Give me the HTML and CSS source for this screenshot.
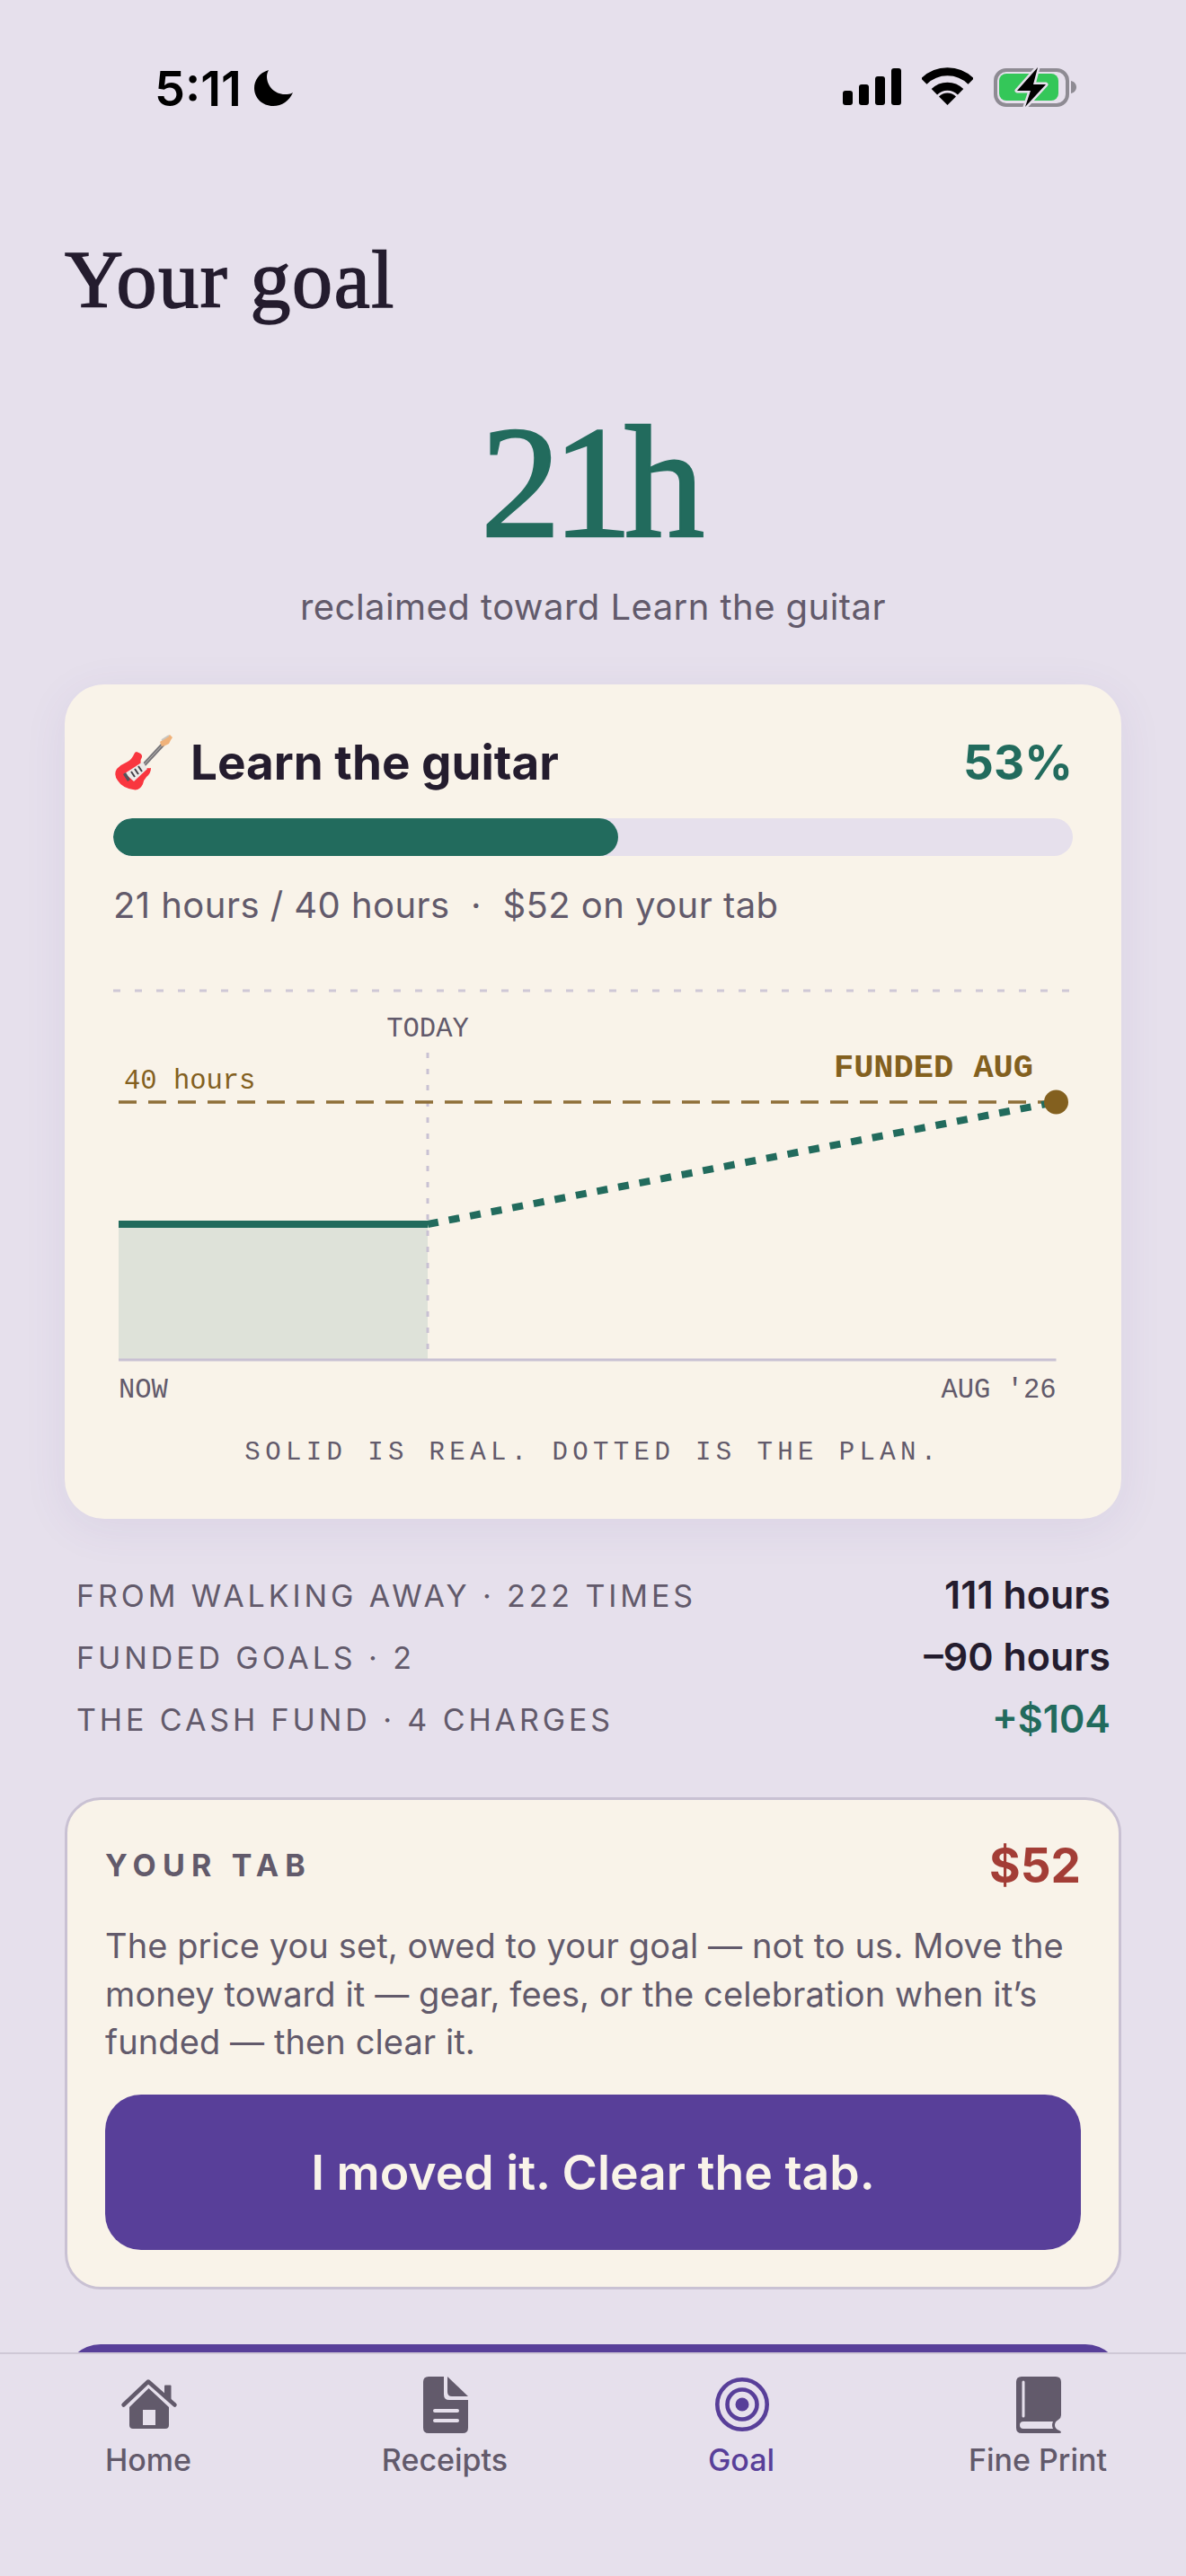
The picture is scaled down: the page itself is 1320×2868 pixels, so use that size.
FILE: index.html
```html
<!DOCTYPE html>
<html lang="en">

<head>
    <meta charset="UTF-8">
    <meta name="viewport" content="width=device-width, initial-scale=1.0">
    <title>Your goal</title>
    <link rel="stylesheet" href="styles.css">
</head>

<body>
    <div class="app">
        <div class="status-bar">
            <div class="clock">
                <span class="time">5:11</span>
                <svg class="moon" width="43" height="41" viewBox="0 0 43 41">
                    <path d="M16 1C5 4 0 13 0 21C0 32 9 41 21 41C31 41 39 35 43 26C40 28 37 28 34 28C23 28 14 19 14 8C14 5 15 3 16 1Z" fill="#000" />
                </svg>
            </div>
            <div class="status-icons">
                <svg width="65" height="43" viewBox="0 0 65 43">
                    <rect x="0" y="26" width="11" height="16" rx="3" />
                    <rect x="18" y="19" width="11" height="23" rx="3" />
                    <rect x="36" y="10" width="11" height="32" rx="3" />
                    <rect x="54" y="1" width="11" height="41" rx="3" />
                </svg>
                <svg width="57" height="43" viewBox="0 0 57 43">
                    <path d="M2.3 15.6A37 37 0 0 1 54.7 15.6" fill="none" stroke="#000" stroke-width="9" />
                    <path d="M13.9 27.2A20.7 20.7 0 0 1 43.1 27.2" fill="none" stroke="#000" stroke-width="9" />
                    <path d="M28.5 42L19 32.5A13.4 13.4 0 0 1 38 32.5Z" />
                </svg>
                <svg width="92" height="44" viewBox="0 0 92 44">
                    <rect x="2" y="3" width="80" height="39" rx="12" fill="none" stroke="#8e8b93" stroke-width="4" />
                    <path d="M86 15C90 16 92 19 92 22C92 25 90 28 86 29Z" fill="#8e8b93" />
                    <rect x="6" y="7" width="66" height="30" rx="8" fill="#34c759" />
                    <path d="M49 0L26 26H41L35 44L58 19L44 19Z" stroke="#e6e0ec" stroke-width="5" paint-order="stroke" stroke-linejoin="round" />
                </svg>
            </div>
        </div>

        <main class="content">
            <h1>Your goal</h1>
            <div class="hero-number">21h</div>
            <div class="hero-sub">reclaimed toward Learn the guitar</div>

            <section class="goal-card">
                <div class="goal-head">
                    <div class="goal-name">
                        <svg class="guitar" width="68" height="68" viewBox="0 0 68 68">
                            <path d="M31 40L57 12" stroke="#77757a" stroke-width="4.5" />
                            <path d="M31 40L57 12" stroke="#b9b6b2" stroke-width="1" />
                            <path d="M52 11L63 3L66 6L64 9L62 13L58 15L54 16Z" fill="#f0b27a" />
                            <path d="M54 9L62 4" stroke="#c9c5c0" stroke-width="2" />
                            <path d="M26 22Q33 24 32 28Q29 33 32 38Q36 41 42 40Q42 46 37 50Q34 53 33 58Q29 66 22 64Q10 62 5 54Q0 47 4 41Q9 36 16 33Q21 30 23 25Q24 22 26 22Z" fill="#f9363f" />
                            <path d="M13 46L33 33L38 41L23 55Z" fill="#eceae8" />
                            <path d="M11 47L16 55L19 53L14 45Z" fill="#55525a" />
                            <path d="M20 44L24 50M24 41L28 47M28 38L32 44" stroke="#45424a" stroke-width="2" />
                        </svg>
                        <h2>Learn the guitar</h2>
                    </div>
                    <div class="goal-pct">53%</div>
                </div>
                <div class="progress">
                    <div class="progress-fill" style="width: 52.6%"></div>
                </div>
                <p class="goal-stats">21 hours / 40 hours &nbsp;·&nbsp; $52 on your tab</p>

                <svg class="chart" width="1068" height="470" viewBox="0 0 1068 470">
                    <line x1="0" y1="3" x2="1068" y2="3" stroke="#cfc8d6" stroke-width="3" stroke-dasharray="8 16" />
                    <rect x="6" y="263" width="344" height="151" fill="#dee2d9" />
                    <line x1="350" y1="72" x2="350" y2="414" stroke="#c9c1d3" stroke-width="3" stroke-dasharray="6 12" />
                    <line x1="6" y1="127" x2="1049" y2="127" stroke="#8e6f38" stroke-width="3.5" stroke-dasharray="20 13" />
                    <line x1="6" y1="414" x2="1049.5" y2="414" stroke="#c9c1d3" stroke-width="3" />
                    <line x1="6" y1="263" x2="350" y2="263" stroke="#226b5d" stroke-width="8" />
                    <line x1="350" y1="263" x2="1049" y2="127" stroke="#226b5d" stroke-width="8" stroke-dasharray="12 12" />
                    <circle cx="1049.5" cy="127" r="13.5" fill="#83601f" />
                    <text class="chart-label" x="350" y="54" text-anchor="middle">TODAY</text>
                    <text class="chart-label gold" x="12" y="112">40 hours</text>
                    <text class="chart-funded" x="1024" y="99" text-anchor="end">FUNDED AUG</text>
                    <text class="chart-label" x="6" y="456">NOW</text>
                    <text class="chart-label" x="1049.5" y="456" text-anchor="end">AUG '26</text>
                </svg>
                <p class="chart-caption">SOLID IS REAL. DOTTED IS THE PLAN.</p>
            </section>

            <div class="ledger">
                <div class="ledger-row">
                    <span class="ledger-label">FROM WALKING AWAY · 222 TIMES</span>
                    <span class="ledger-value">111 hours</span>
                </div>
                <div class="ledger-row">
                    <span class="ledger-label">FUNDED GOALS · 2</span>
                    <span class="ledger-value">–90 hours</span>
                </div>
                <div class="ledger-row">
                    <span class="ledger-label">THE CASH FUND · 4 CHARGES</span>
                    <span class="ledger-value green">+$104</span>
                </div>
            </div>

            <section class="tab-card">
                <div class="tab-head">
                    <span class="tab-title">YOUR TAB</span>
                    <span class="tab-amount">$52</span>
                </div>
                <p class="tab-text">The price you set, owed to your goal — not to us. Move the money toward it — gear, fees, or the celebration when it’s funded — then clear it.</p>
                <button class="primary-btn">I moved it. Clear the tab.</button>
            </section>

            <button class="primary-btn next-btn"></button>
        </main>

        <nav class="tabbar">
            <div class="tab-item">
                <svg width="72" height="72" viewBox="0 0 72 72">
                    <path d="M54 14.5a1 1 0 0 1 1-1h5.5a1 1 0 0 1 1 1V31L54 24Z" fill="#625a6b" />
                    <path d="M8.5 35.5L36 9.5L65.5 35.5" fill="none" stroke="#625a6b" stroke-width="4.5" stroke-linecap="round" stroke-linejoin="round" />
                    <path fill-rule="evenodd" fill="#625a6b" d="M36.5 17L59 38V58Q59 62 55 62H19Q15 62 15 58V38ZM30 41V58H44V41Z" />
                </svg>
                <span>Home</span>
            </div>
            <div class="tab-item">
                <svg width="72" height="72" viewBox="0 0 72 72">
                    <path fill="#625a6b" d="M18 4H35V24Q35 30 41 30H62V61Q62 67 56 67H18Q12 67 12 61V10Q12 4 18 4Z" />
                    <path fill="#625a6b" d="M39 4L62 26H44Q39 26 39 21Z" />
                    <path d="M25 42H50M25 53H50" stroke="#e6e0ec" stroke-width="4" stroke-linecap="round" />
                </svg>
                <span>Receipts</span>
            </div>
            <div class="tab-item active">
                <svg width="72" height="72" viewBox="0 0 72 72">
                    <circle cx="37" cy="35" r="27.7" fill="none" stroke="#583f99" stroke-width="4.6" />
                    <circle cx="37" cy="35" r="16.5" fill="none" stroke="#583f99" stroke-width="4.6" />
                    <circle cx="37" cy="35" r="7.5" fill="#583f99" />
                </svg>
                <span>Goal</span>
            </div>
            <div class="tab-item">
                <svg width="72" height="72" viewBox="0 0 72 72">
                    <path fill="#625a6b" fill-rule="evenodd" d="M18 4H56Q62 4 62 10V47Q62 50 59 52Q55 54 55 58Q55 62 60 64Q62 65 62 66Q62 67 60 67H18Q12 67 12 61V10Q12 4 18 4ZM20 54Q16 54 16 58Q16 62 20 62H53Q51 58 53 54Z" />
                    <path d="M20 10V48" stroke="#e6e0ec" stroke-width="3" stroke-linecap="round" />
                </svg>
                <span>Fine Print</span>
            </div>
        </nav>
    </div>
</body>

</html>
```

FILE: styles.css
```css
* {
    box-sizing: border-box;
}

body {
    margin: 0;
    background-color: #e6e0ec;
    font-family: Inter, "Noto Sans", sans-serif;
    color: #241c2e;
}

.app {
    width: 1320px;
    height: 2868px;
    display: flex;
    flex-direction: column;
    overflow: hidden;
}

/* status bar */
.status-bar {
    height: 150px;
    flex-shrink: 0;
    display: flex;
    justify-content: space-between;
    align-items: flex-start;
    padding: 69px 122px 0 172px;
}

.clock {
    display: flex;
    gap: 14px;
}

.time {
    font-size: 54px;
    line-height: 60px;
    font-weight: 600;
    color: #000;
}

.moon {
    margin-top: 8px;
}

.status-icons {
    display: flex;
    gap: 23px;
    margin-top: 6px;
}

/* page */
.content {
    flex: 1;
    min-height: 0;
    overflow: hidden;
    padding: 0 72px;
}

h1 {
    margin: 112px 0 0;
    font-family: "Liberation Serif", serif;
    font-size: 90px;
    line-height: 100px;
    font-weight: 400;
    letter-spacing: 1.6px;
    -webkit-text-stroke: 1.6px #241c2e;
}

.hero-number {
    margin-top: 85px;
    padding-right: 10px;
    text-align: center;
    font-family: "Liberation Serif", serif;
    font-size: 178px;
    line-height: 180px;
    letter-spacing: -9px;
    color: #226b5d;
    -webkit-text-stroke: 2.5px #226b5d;
}

.hero-sub {
    margin-top: 24px;
    text-align: center;
    font-size: 40px;
    line-height: 50px;
    letter-spacing: 0.45px;
    color: #625a6b;
}

/* goal card */
.goal-card {
    margin-top: 61px;
    padding: 55px 54px;
    background-color: #f9f3e9;
    border-radius: 44px;
    box-shadow: 0 10px 50px rgba(88, 63, 153, 0.08);
}

.goal-head {
    display: flex;
    justify-content: space-between;
    align-items: center;
}

.goal-name {
    display: flex;
    align-items: center;
    gap: 18px;
}

.guitar {
    margin: -4px 0;
}

h2 {
    margin: 0;
    font-size: 53px;
    line-height: 64px;
    font-weight: 700;
}

.goal-pct {
    font-size: 53px;
    line-height: 64px;
    font-weight: 700;
    color: #226b5d;
}

.progress {
    margin-top: 30px;
    height: 42px;
    border-radius: 21px;
    background-color: #e6e0ec;
    overflow: hidden;
}

.progress-fill {
    height: 100%;
    border-radius: 21px;
    background-color: #226b5d;
}

.goal-stats {
    margin: 29.5px 0 0;
    font-size: 40px;
    line-height: 50px;
    letter-spacing: 0.45px;
    color: #625a6b;
}

.chart {
    display: block;
    margin-top: 67.5px;
}

.chart-label {
    font-family: "Liberation Mono", monospace;
    font-size: 30.5px;
    fill: #625a6b;
}

.chart-label.gold {
    fill: #83601f;
}

.chart-funded {
    font-family: "Liberation Mono", monospace;
    font-size: 37px;
    font-weight: 700;
    fill: #83601f;
}

.chart-caption {
    margin: 30px 0 0;
    text-align: center;
    font-family: "Liberation Mono", monospace;
    font-size: 29px;
    line-height: 36px;
    letter-spacing: 5.4px;
    color: #625a6b;
}

/* ledger rows */
.ledger {
    margin-top: 49px;
    padding: 0 12px 0 13px;
}

.ledger-row {
    display: flex;
    justify-content: space-between;
    align-items: flex-start;
    height: 69px;
}

.ledger-label {
    font-size: 34px;
    line-height: 73px;
    letter-spacing: 3.9px;
    color: #625a6b;
}

.ledger-value {
    font-size: 43px;
    line-height: 71px;
    font-weight: 600;
}

.ledger-value.green {
    color: #226b5d;
}

/* tab card */
.tab-card {
    margin-top: 54px;
    padding: 41px 42px;
    background-color: #f9f3e9;
    border: 3px solid #c9c1d3;
    border-radius: 40px;
}

.tab-head {
    display: flex;
    justify-content: space-between;
    align-items: center;
}

.tab-title {
    font-size: 34px;
    line-height: 40px;
    font-weight: 700;
    letter-spacing: 7.2px;
    color: #625a6b;
}

.tab-amount {
    font-size: 53px;
    line-height: 64px;
    font-weight: 700;
    color: #a33d36;
}

.tab-text {
    margin: 31px 0 0;
    font-size: 38px;
    line-height: 53.5px;
    letter-spacing: 0.1px;
    color: #625a6b;
}

.primary-btn {
    display: block;
    width: 100%;
    height: 173px;
    margin-top: 31.5px;
    border: none;
    border-radius: 40px;
    background-color: #583f99;
    color: #f9f3e9;
    font-family: Inter, sans-serif;
    font-size: 53.5px;
    font-weight: 600;
}

.next-btn {
    margin-top: 61px;
}

/* bottom tabs */
.tabbar {
    height: 249px;
    flex-shrink: 0;
    display: grid;
    grid-template-columns: repeat(4, 1fr);
    padding-top: 21px;
    border-top: 2px solid #cfc8d6;
    background-color: #e6e0ec;
}

.tab-item {
    display: flex;
    flex-direction: column;
    align-items: center;
    gap: 5px;
    font-size: 34px;
    line-height: 40px;
    font-weight: 500;
    color: #625a6b;
}

.tab-item.active {
    color: #583f99;
}
```
